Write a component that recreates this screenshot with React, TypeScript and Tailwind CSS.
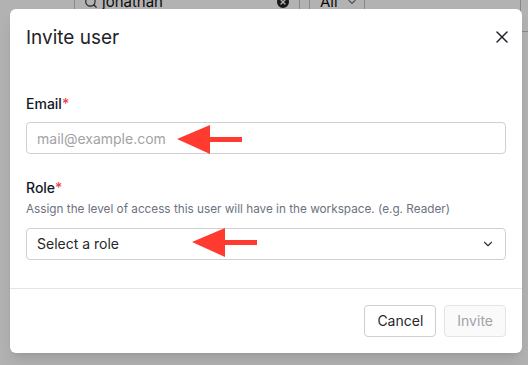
import { ChevronDown, Search, X, XCircle } from 'lucide-react';

const Arrow = ({ className }: { className: string }) => (
  <svg
    className={className}
    width="66"
    height="30"
    viewBox="0 0 66 30"
    fill="#ff3b30"
  >
    <polygon points="0,14 33,0 33,12 65,12 65,17 33,17 33,29" />
  </svg>
);

const App = () => {
  return (
    <div
      className="relative w-[528px] h-[365px] overflow-hidden bg-white"
      style={{ fontFamily: 'Inter, "Noto Sans", sans-serif' }}
    >
      {/* page behind the dialog */}
      <div className="flex -mt-[14px] pl-[74px]">
        <div className="flex items-center w-[226px] h-[32px] border border-[#c4c4c4] rounded-md pl-[9px] pr-[8px]">
          <Search size={14} className="text-[#333]" />
          <span className="ml-[4px] text-[15px] text-[#111]">jonathan</span>
          <XCircle size={16} className="ml-auto fill-[#222] text-white" />
        </div>
        <div className="flex items-center ml-[9px] w-[56px] h-[32px] border border-[#c4c4c4] rounded-md pl-[10px] text-[15px] text-[#111]">
          All
          <ChevronDown size={12} className="ml-[8px]" />
        </div>
        <div className="ml-auto mt-[14px] w-[8px] h-[32px] border-l border-b border-[#c4c4c4]" />
      </div>

      <div className="absolute inset-0 bg-black/30 pt-[9px] pl-[10px]">
        <div className="relative w-[512px] bg-white rounded-md shadow-lg">
          <div className="flex items-center justify-between pl-4 pr-[16px] pt-[15px]">
            <h2 className="text-[19px] leading-7 text-[#1f2328]">Invite user</h2>
            <button className="text-[#1f2328] -mt-[2px] -mr-[6px]">
              <X size={20} strokeWidth={1.8} />
            </button>
          </div>

          <div className="px-4 pt-[42px] pb-[28px]">
            <label className="block text-sm font-medium text-[#111827]">
              Email<span className="text-[#ef4444]">*</span>
            </label>
            <input
              type="email"
              placeholder="mail@example.com"
              className="mt-2 w-full h-8 px-[10px] text-sm border border-[#d0d0d0] rounded-[4px] placeholder:text-[#a3a3a3] outline-none"
            />

            <label className="block mt-[24px] text-sm font-medium text-[#111827]">
              Role<span className="text-[#ef4444]">*</span>
            </label>
            <p className="mt-[3px] text-[11.75px] leading-4 text-[#6b7280]">
              Assign the level of access this user will have in the workspace. (e.g. Reader)
            </p>
            <div className="mt-[11px] flex items-center w-full h-8 px-[10px] text-sm text-[#27272a] border border-[#d0d0d0] rounded-[4px]">
              Select a role
              <ChevronDown size={14} strokeWidth={2} className="ml-auto text-[#333]" />
            </div>
          </div>

          <div className="flex justify-end gap-2 px-4 py-4 border-t border-[#e4e4e7]">
            <button className="h-8 px-3 text-sm text-[#27272a] border border-[#cfcfcf] rounded-[4px]">
              Cancel
            </button>
            <button
              disabled
              className="h-8 px-3 text-sm text-[#a1a1aa] bg-[#fafafa] border border-[#e4e4e7] rounded-[4px]"
            >
              Invite
            </button>
          </div>

          <Arrow className="absolute left-[167px] top-[116px]" />
          <Arrow className="absolute left-[182px] top-[219px]" />
        </div>
      </div>
    </div>
  );
};

export default App;
